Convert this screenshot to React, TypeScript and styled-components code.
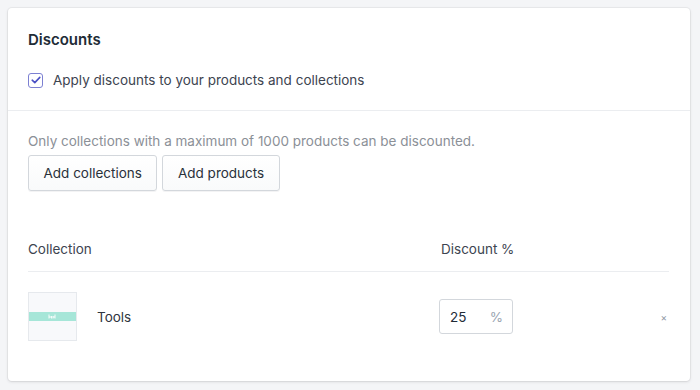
import React from "react";
import styled, { createGlobalStyle } from "styled-components";

const Global = createGlobalStyle`
  html, body { margin: 0; padding: 0; background: #f4f5f7; }
  body { font-family: Inter, "Noto Sans", sans-serif; -webkit-font-smoothing: antialiased; }
  * { box-sizing: border-box; }
`;

const Page = styled.div`
  padding: 8px 10px 9px 8px;
  width: 700px;
  height: 390px;
`;

const Card = styled.div`
  background: #fff;
  border-radius: 4px;
  box-shadow: 0 0 0 1px rgba(63, 63, 68, 0.05), 0 1px 3px 0 rgba(63, 63, 68, 0.15);
  height: 373px;
  display: flex;
  flex-direction: column;
`;

const Section = styled.div<{ $top: number }>`
  padding: ${(p) => p.$top}px 20px 0 20px;
`;

const Divider = styled.div`
  height: 1px;
  background: #ebedf0;
  margin-top: 20px;
`;

const Title = styled.h2`
  margin: 0;
  font-size: 15px;
  font-weight: 600;
  color: #212b36;
  line-height: 20px;
`;

const CheckRow = styled.label`
  display: flex;
  align-items: center;
  gap: 10px;
  margin-top: 20px;
  font-size: 13.5px;
  color: #3d4450;
  line-height: 20px;
`;

const Box = styled.span`
  width: 15px;
  height: 15px;
  border: 1.5px solid #7c80d2;
  border-radius: 3px;
  display: flex;
  align-items: center;
  justify-content: center;
`;

const Hint = styled.p`
  margin: 0;
  font-size: 13.5px;
  color: #8b9097;
  line-height: 20px;
`;

const Buttons = styled.div`
  display: flex;
  gap: 5px;
  margin-top: 4px;
`;

const Button = styled.button`
  height: 36px;
  padding: 0 14.5px;
  background: linear-gradient(#fff, #f9fafb);
  border: 1px solid #d3d7dc;
  border-radius: 3px;
  font-family: inherit;
  font-size: 13.5px;
  color: #2a313a;
  box-shadow: 0 1px 0 rgba(22, 29, 37, 0.05);
`;

const Table = styled.div`
  margin-top: 48px;
`;

const HeadRow = styled.div`
  display: grid;
  grid-template-columns: 411px 1fr;
  padding-bottom: 12px;
  border-bottom: 1px solid #ebedf0;
  font-size: 13.5px;
  color: #3d4450;
  line-height: 20px;
  margin-right: 1px;
`;

const HeadCell = styled.div<{ $pad?: number }>`
  padding-left: ${(p) => p.$pad ?? 0}px;
`;

const Row = styled.div`
  display: grid;
  grid-template-columns: 411px 1fr auto;
  align-items: center;
  padding-top: 20px;
`;

const Item = styled.div`
  display: flex;
  align-items: center;
  gap: 20px;
  font-size: 13.5px;
  color: #2f3640;
`;

const Thumb = styled.div`
  width: 49px;
  height: 49px;
  border: 1px solid #e6e9ed;
  background: #f8f9fb;
  display: flex;
  align-items: center;
`;

const InputBox = styled.div`
  width: 74px;
  height: 35px;
  border: 1px solid #d3d7dc;
  border-radius: 3px;
  display: flex;
  align-items: center;
  justify-content: space-between;
  padding: 0 9px 0 10px;
  font-size: 13.5px;
  color: #212b36;
`;

const Suffix = styled.span`
  color: #9aa5b1;
`;

const Remove = styled.span`
  font-size: 10px;
  color: #8f98a3;
  margin-right: 3px;
  line-height: 1;
`;

export default function App() {
  return (
    <>
      <Global />
      <Page>
        <Card>
          <Section $top={22}>
            <Title>Discounts</Title>
            <CheckRow>
              <Box>
                <svg width="10" height="8" viewBox="0 0 10 8">
                  <path d="M1.2 4.2 L3.8 6.6 L8.8 1.4" stroke="#4a50c4" strokeWidth="1.6" fill="none" strokeLinecap="round" strokeLinejoin="round" />
                </svg>
              </Box>
              Apply discounts to your products and collections
            </CheckRow>
          </Section>
          <Divider />
          <Section $top={20}>
            <Hint>Only collections with a maximum of 1000 products can be discounted.</Hint>
            <Buttons>
              <Button>Add collections</Button>
              <Button>Add products</Button>
            </Buttons>
            <Table>
              <HeadRow>
                <HeadCell>Collection</HeadCell>
                <HeadCell $pad={2}>Discount %</HeadCell>
              </HeadRow>
              <Row>
                <Item>
                  <Thumb>
                    <svg width="47" height="9" viewBox="0 0 47 9">
                      <rect x="0" y="0" width="47" height="9" fill="#a6e6d8" />
                      <path d="M20 2.5v4M20 5h2M22.5 4v2.5M24 4v2.5M24 5h2M26 2.5v4" stroke="#fff" strokeWidth="0.9" />
                    </svg>
                  </Thumb>
                  Tools
                </Item>
                <InputBox>
                  <span>25</span>
                  <Suffix>%</Suffix>
                </InputBox>
                <Remove>×</Remove>
              </Row>
            </Table>
          </Section>
        </Card>
      </Page>
    </>
  );
}
